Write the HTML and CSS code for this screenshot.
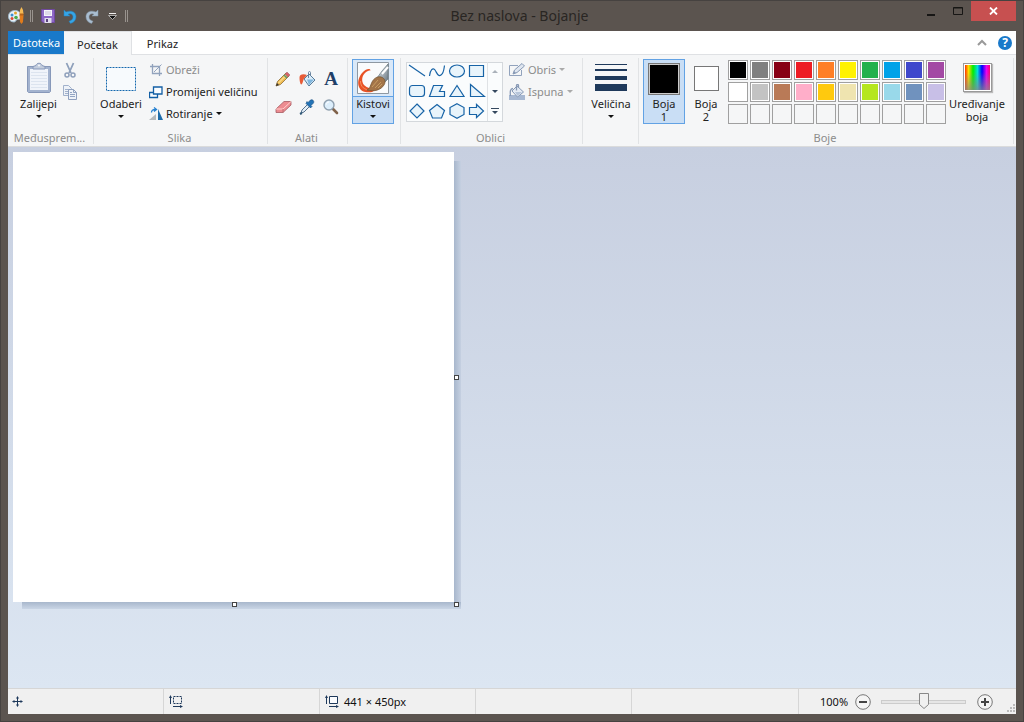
FILE: index.html
```html
<!DOCTYPE html>
<html lang="hr">
<head>
<meta charset="utf-8">
<meta name="viewport" content="width=device-width,initial-scale=1">
<title>Bez naslova - Bojanje</title>
<link rel="stylesheet" href="styles.css">
</head>
<body>
<div class="window">

  <!-- ===== Title bar ===== -->
  <header class="titlebar">
    <div class="quick">
      <svg class="app-icon" width="16" height="18" viewBox="0 0 16 18">
        <path d="M7 3.500C3 3.500.5 6 .5 9.500S3 15 6 15c2 0 1.500-2 3-2.500S13 13 13 9.500 11 3.500 7 3.500z" fill="#e8f1f8" stroke="#9fb9cc"/>
        <circle cx="4" cy="8" r="1.500" fill="#3c8fd0"/><circle cx="7.500" cy="6" r="1.500" fill="#e2a32b"/><circle cx="4" cy="11.500" r="1.500" fill="#d94a35"/><circle cx="8" cy="10.500" r="1.800" fill="#49ab4c"/>
        <path d="M11.500 8h4l-.5 7-1.500 2-1.500-2z" fill="#e07b1c"/><path d="M11.500 7l.5-4 1.500-3 1.500 3 .5 4z" fill="#f6ba54"/><path d="M11.500 6.500h4v2h-4z" fill="#b8651b"/>
      </svg>
      <span class="grip"></span>
      <button class="quick-btn" aria-label="Spremi">
        <svg width="14" height="14" viewBox="0 0 14 14"><path d="M.5.5h13v13H2l-1.500-1.500z" fill="#8d67c5" stroke="#70499f"/><path d="M3 1h8v6H3z" fill="#f5f4fa"/><path d="M4 3h6M4 5h6" stroke="#c6bed7"/><path d="M3.500 9h7v5h-7z" fill="#e1dced"/><path d="M5 10h2v3H5z" fill="#59427b"/></svg>
      </button>
      <button class="quick-btn" aria-label="Poništi">
        <svg width="14" height="15" viewBox="0 0 14 15"><path d="M1 1v6h6L5 5.300c3-1.300 5 .2 5 2.700 0 2.200-1.500 3.500-4 4.200L7.500 14.500C11 13.500 13 11 13 7.700 13 3 8.500.8 3 3z" fill="#35a5e7" stroke="#2483c0" stroke-width=".5"/></svg>
      </button>
      <button class="quick-btn" aria-label="Ponovi">
        <svg width="14" height="15" viewBox="0 0 14 15"><path d="M13 1v6H7l2-1.700C6 4 4 5.500 4 8c0 2.200 1.500 3.500 4 4.200L6.500 14.500C3 13.500 1 11 1 7.700 1 3 5.500.8 11 3z" fill="#a9bdd0" stroke="#8699aa" stroke-width=".5"/></svg>
      </button>
      <button class="quick-btn quick-more" aria-label="Prilagodi alatnu traku">
        <svg width="9" height="8" viewBox="0 0 9 8"><path d="M1 1.500h7" stroke="#eee"/><path d="M.5 3.500h8L4.500 7.500z" fill="#111" stroke="#ddd" stroke-width=".7"/></svg>
      </button>
      <span class="grip"></span>
    </div>
    <h1 class="title">Bez naslova - Bojanje</h1>
    <div class="controls">
      <button class="control" aria-label="Minimiziraj"><svg width="10" height="10" viewBox="0 0 10 10"><path d="M1 8h8v2H1z" fill="#171615"/></svg></button>
      <button class="control" aria-label="Maksimiziraj"><svg width="10" height="8" viewBox="0 0 10 8"><path d="M.5.5h9v7h-9zM.5 1h9" fill="none" stroke="#171615"/></svg></button>
      <button class="control close" aria-label="Zatvori"><svg width="9" height="8" viewBox="0 0 9 8"><path d="M1 .5l7 7M8 .5l-7 7" stroke="#fff" stroke-width="1.800"/></svg></button>
    </div>
  </header>

  <!-- ===== Tabs ===== -->
  <nav class="tabs">
    <button class="tab file">Datoteka</button>
    <button class="tab active">Početak</button>
    <button class="tab">Prikaz</button>
    <div class="tab-tools">
      <button class="icon-btn" aria-label="Smanji vrpcu"><svg width="10" height="8" viewBox="0 0 10 8"><path d="M1 6l4-4 4 4" fill="none" stroke="#999" stroke-width="2"/></svg></button>
      <button class="help" aria-label="Pomoć">?</button>
    </div>
  </nav>

  <!-- ===== Ribbon ===== -->
  <div class="ribbon">
    <section class="group g-clip">
      <div class="tools">
        <button class="big">
          <span class="slot"><svg width="26" height="32" viewBox="0 0 26 32">
            <path d="M1.500 4.500h23v25l-1 1h-21l-1-1z" fill="#a3b3cf" stroke="#8798b9"/><path d="M4 7h18v21H4z" fill="#f0f4fa"/>
            <path d="M5 10.500h16M5 13.500h16M5 16.500h16M5 19.500h16M5 22.500h16M5 25.500h16" stroke="#dce4ef"/>
            <path d="M7 7V4.500l3-1C10.500.5 15.500.5 16 3.500l3 1V7z" fill="#c3cddd" stroke="#8798b9"/><circle cx="13" cy="3.500" r="1" fill="#f5f7fa"/></svg></span>
          <span class="label">Zalijepi</span><i class="arrow"></i>
        </button>
        <div class="stack">
          <button class="icon-btn" aria-label="Izreži"><svg width="12" height="17" viewBox="0 0 12 17"><path d="M2.500 1l4.500 10M9.500 1L5 11" stroke="#8fa0bb" stroke-width="1.800"/><circle cx="3" cy="13" r="2" fill="none" stroke="#8fa0bb" stroke-width="1.500"/><circle cx="9" cy="13" r="2" fill="none" stroke="#8fa0bb" stroke-width="1.500"/></svg></button>
          <button class="icon-btn" aria-label="Kopiraj"><svg width="16" height="17" viewBox="0 0 16 17"><path d="M1.500 1.500h5l3 3v7h-8z" fill="#eef2f8" stroke="#a1b1cb"/><path d="M3 5.500h4M3 7.500h4M3 9.500h4" stroke="#a1b1cb"/><path d="M6.500 5.500h5l3 3v7h-8z" fill="#eef2f8" stroke="#8fa0bf"/><path d="M11.500 5.500v3h3M8 10.500h5M8 12.500h5M8 8.500h2" fill="none" stroke="#93a5c3"/></svg></button>
        </div>
      </div>
      <h2 class="caption">Međusprem...</h2>
    </section>

    <section class="group g-image">
      <div class="tools">
        <button class="big">
          <span class="slot"><svg width="32" height="26" viewBox="0 0 32 26"><path d="M1.500 1.500h29v23h-29z" fill="#f7fafd" stroke="#1468ae" stroke-dasharray="2 1"/></svg></span>
          <span class="label">Odaberi</span><i class="arrow"></i>
        </button>
        <div class="list">
          <button class="row disabled"><svg width="14" height="14" viewBox="0 0 14 14"><path d="M3.500 1v9.500H13M1 3.500h9.500V13" fill="none" stroke="#92a3bd" stroke-width="1.300"/><path d="M5 9l7.500-7.500" stroke="#92a3bd"/></svg>Obreži</button>
          <button class="row"><svg width="14" height="14" viewBox="0 0 14 14"><path d="M.5 7.500h8v5h-8z" fill="#f9fcff" stroke="#135fa5" stroke-width="1.300"/><path d="M4.500 2h8.500v7H4.500z" fill="#f9fcff" stroke="#135fa5" stroke-width="1.300"/></svg>Promijeni veličinu</button>
          <button class="row"><svg width="14" height="14" viewBox="0 0 14 14"><path d="M0 13h7V7z" fill="#b4b8bb"/><path d="M9 13V2l5 11z" fill="#1e6caa"/><path d="M2.500 5.500c0-2 1-3 4-3M5 .5l2.500 2L5 4.500" fill="none" stroke="#2781d1" stroke-width="1.300"/></svg>Rotiranje<i class="arrow"></i></button>
        </div>
      </div>
      <h2 class="caption">Slika</h2>
    </section>

    <section class="group g-tools">
      <div class="tools tool-grid">
        <button class="icon-btn" aria-label="Olovka"><svg width="16" height="16" viewBox="0 0 16 16"><path d="M1 15l1.500-4.500L11 2l3 3-8.500 8.500z" fill="#f0bd55" stroke="#8a6a32" stroke-width=".8"/><path d="M3.500 12L12 3.500" stroke="#fff0ae"/><path d="M10 3l3 3 2-2-3-3z" fill="#d7626b" stroke="#8e6261" stroke-width=".5"/><path d="M9 4l3 3" stroke="#62966b" stroke-width="1.500"/><path d="M1 15l1-3 2 2z" fill="#333"/></svg></button>
        <button class="icon-btn" aria-label="Ispuni bojom"><svg width="17" height="16" viewBox="0 0 17 16"><path d="M5 8l5-5 6 6-6 6z" fill="#d9ecf9" stroke="#567b9a"/><path d="M8 8.500h7L10 14z" fill="#81b6dd"/><path d="M9.500 7V1.500c0-1.300 2-1.300 2 0V5" fill="none" stroke="#6985a0"/><path d="M8 4C4 2.500.5 3.500.5 6.500c0 3 .5 6 1.500 7 1.500.5 2-4 3-6z" fill="#e75b37"/></svg></button>
        <button class="icon-btn letter" aria-label="Tekst">A</button>
        <button class="icon-btn" aria-label="Gumica"><svg width="17" height="14" viewBox="0 0 17 14"><path d="M1 9l8-7.500h7V5l-8 7.500H1z" fill="#ed8c91" stroke="#a65c62" stroke-width=".8"/><path d="M1 9h7l8-7.500" fill="none" stroke="#ffd0cd"/><path d="M8 9v3.500" stroke="#bd6d72"/></svg></button>
        <button class="icon-btn" aria-label="Birač boja"><svg width="16" height="16" viewBox="0 0 16 16"><path d="M2 14l1-3 6-6 2 2-6 6z" fill="#e2eef7" stroke="#56728e"/><path d="M7 4.500L11.500 9l1.500-1.500-1-1 2.500-2.500c1-2-1-4-3-3L9 3.500l-1-1z" fill="#2373b6" stroke="#174e80" stroke-width=".6"/><path d="M1 15l2-1" stroke="#315977" stroke-width="2"/></svg></button>
        <button class="icon-btn" aria-label="Povećalo"><svg width="16" height="16" viewBox="0 0 16 16"><path d="M9.500 9.500l4.500 4.500" stroke="#80634b" stroke-width="2.600" stroke-linecap="round"/><circle cx="6" cy="6" r="5" fill="#dceefb" stroke="#8fa0af" stroke-width="1.400"/><path d="M3.500 5.500c0-1.500 1-2.500 2.500-2.500" fill="none" stroke="#fff"/></svg></button>
      </div>
      <h2 class="caption">Alati</h2>
    </section>

    <section class="group g-brush">
      <div class="tools">
        <button class="big selected split">
          <span class="slot"><svg width="32" height="32" viewBox="0 0 32 32">
            <defs><linearGradient id="metal" x2="1" y2="1"><stop stop-color="#eef3f7"/><stop offset="1" stop-color="#65737d"/></linearGradient></defs>
            <path d="M.5.5h31v31H.5z" fill="#fafbfc" stroke="#8e98a2"/>
            <path d="M13.500 8.500C13 6 9 7 6 10 2 14 0 20 2 25c2 5 8 6 13 5l5-3c-5 0-10-1-13-4-3-4-2-9 1-12 2-2 4-2.500 5.500-2.500z" fill="#e85225"/><path d="M3.500 19c0 6 4 9 10 9" fill="none" stroke="#f79160"/>
            <path d="M20 16l5-7 6-7v15l-4 4z" fill="url(#metal)" stroke="#667780" stroke-width=".7"/><path d="M25 12l6-7" stroke="#fff" stroke-width="2"/>
            <path d="M10 28c3-1 3-4 5-8 2-4 6-6 9-5 4 1 5 5 3 8-3 5-10 7-17 5z" fill="#a37448" stroke="#70502e" stroke-width=".7"/><path d="M15 25l6-7M18 26l6-6M21 26l4-4" stroke="#d0a76a" stroke-width=".8"/></svg></span>
          <span class="label">Kistovi</span><i class="arrow"></i>
        </button>
      </div>
    </section>

    <section class="group g-shapes">
      <div class="tools">
        <div class="gallery">
          <div class="shapes">
            <button class="icon-btn" aria-label="Crta"><svg width="18" height="16" viewBox="0 0 18 16"><path d="M1 2l16 11"/></svg></button>
            <button class="icon-btn" aria-label="Krivulja"><svg width="18" height="16" viewBox="0 0 18 16"><path class="open" d="M1.500 13C2 7 5 4 7 7s3 7 6 5 3-7 3.500-9.500"/></svg></button>
            <button class="icon-btn" aria-label="Elipsa"><svg width="18" height="16" viewBox="0 0 18 16"><ellipse cx="9" cy="8" rx="7.500" ry="6"/></svg></button>
            <button class="icon-btn" aria-label="Pravokutnik"><svg width="18" height="16" viewBox="0 0 18 16"><path d="M1.500 2.500h14v11h-14z"/></svg></button>
            <button class="icon-btn" aria-label="Zaobljeni pravokutnik"><svg width="18" height="16" viewBox="0 0 18 16"><rect x="1.500" y="2.500" width="15" height="11" rx="3"/></svg></button>
            <button class="icon-btn" aria-label="Mnogokut"><svg width="18" height="16" viewBox="0 0 18 16"><path d="M5.500 2.500h9l-3 6h5v5h-15z"/></svg></button>
            <button class="icon-btn" aria-label="Trokut"><svg width="18" height="16" viewBox="0 0 18 16"><path d="M9 2.500l7 11H2z"/></svg></button>
            <button class="icon-btn" aria-label="Pravokutni trokut"><svg width="18" height="16" viewBox="0 0 18 16"><path d="M2.500 1.500l14 12h-14z"/></svg></button>
            <button class="icon-btn" aria-label="Romb"><svg width="18" height="16" viewBox="0 0 18 16"><path d="M9 1l7 7-7 7-7-7z"/></svg></button>
            <button class="icon-btn" aria-label="Peterokut"><svg width="18" height="16" viewBox="0 0 18 16"><path d="M9 1.500l7.500 6-3 7.500h-9l-3-7.500z"/></svg></button>
            <button class="icon-btn" aria-label="Šesterokut"><svg width="18" height="16" viewBox="0 0 18 16"><path d="M9 .8l7 3.700v7L9 15.200l-7-3.700v-7z"/></svg></button>
            <button class="icon-btn" aria-label="Strelica"><svg width="18" height="16" viewBox="0 0 18 16"><path d="M1.500 4.500h7V1.500L15.500 8l-7 6.500v-3h-7z"/></svg></button>
          </div>
          <div class="scroller">
            <button class="icon-btn" aria-label="Gore"><i class="arrow up"></i></button>
            <button class="icon-btn" aria-label="Dolje"><i class="arrow navy"></i></button>
            <button class="icon-btn" aria-label="Više"><svg width="8" height="8" viewBox="0 0 8 8"><path d="M0 1h8v1H0zM1 4h6L4 7z" fill="#34485f"/></svg></button>
          </div>
        </div>
        <div class="list">
          <button class="row disabled"><svg width="16" height="14" viewBox="0 0 16 14"><path d="M12.500 7v5.500h-12v-10H9" fill="none" stroke="#92a3bd"/><path d="M4 11l1.500-4L13 .5 15.500 3 8 9.500z" fill="#dfe6f0" stroke="#8799b5"/><path d="M4 11l1-3 2 2z" fill="#8799b5"/></svg>Obris<i class="arrow"></i></button>
          <button class="row disabled"><svg width="16" height="16" viewBox="0 0 16 16"><path d="M0 11h16v5H0z" fill="#a7b8d2"/><path d="M3 7l5-5 6.500 6L8.500 13z" fill="#e4ebf4" stroke="#8799b5"/><path d="M6 8h7l-4.500 4z" fill="#b6c5da"/><path d="M7.500 6.500V1.500c0-1.300 2-1.300 2 0V4M4 4.500C1 4.500 1 8 1.500 12" fill="none" stroke="#8799b5" stroke-width="1.300"/></svg>Ispuna<i class="arrow"></i></button>
        </div>
      </div>
      <h2 class="caption">Oblici</h2>
    </section>

    <section class="group g-size">
      <div class="tools">
        <button class="big">
          <span class="slot"><svg width="32" height="30" viewBox="0 0 32 30"><path d="M0 0h32v1H0zM0 5h32v2H0zM0 12h32v4H0zM0 20h32v7H0z" fill="#1e395b"/></svg></span>
          <span class="label">Veličina</span><i class="arrow"></i>
        </button>
      </div>
    </section>

    <section class="group g-colors">
      <div class="tools">
        <button class="big selected"><span class="slot"><span class="swatch front"></span></span><span class="label">Boja<br>1</span></button>
        <button class="big"><span class="slot"><span class="swatch back"></span></span><span class="label">Boja<br>2</span></button>
        <div class="palette">
          <button class="color black" aria-label="Crna"></button>
          <button class="color gray" aria-label="Siva"></button>
          <button class="color dark-red" aria-label="Tamnocrvena"></button>
          <button class="color red" aria-label="Crvena"></button>
          <button class="color orange" aria-label="Narančasta"></button>
          <button class="color yellow" aria-label="Žuta"></button>
          <button class="color green" aria-label="Zelena"></button>
          <button class="color turquoise" aria-label="Tirkizna"></button>
          <button class="color indigo" aria-label="Indigo"></button>
          <button class="color purple" aria-label="Ljubičasta"></button>
          <button class="color white" aria-label="Bijela"></button>
          <button class="color light-gray" aria-label="Svijetlosiva"></button>
          <button class="color brown" aria-label="Smeđa"></button>
          <button class="color rose" aria-label="Ružičasta"></button>
          <button class="color gold" aria-label="Zlatna"></button>
          <button class="color tan" aria-label="Svijetložuta"></button>
          <button class="color lime" aria-label="Limeta"></button>
          <button class="color aqua" aria-label="Svijetlotirkizna"></button>
          <button class="color blue-gray" aria-label="Plavosiva"></button>
          <button class="color lavender" aria-label="Lavanda"></button>
          <button class="color" aria-label="Prilagođena 1"></button>
          <button class="color" aria-label="Prilagođena 2"></button>
          <button class="color" aria-label="Prilagođena 3"></button>
          <button class="color" aria-label="Prilagođena 4"></button>
          <button class="color" aria-label="Prilagođena 5"></button>
          <button class="color" aria-label="Prilagođena 6"></button>
          <button class="color" aria-label="Prilagođena 7"></button>
          <button class="color" aria-label="Prilagođena 8"></button>
          <button class="color" aria-label="Prilagođena 9"></button>
          <button class="color" aria-label="Prilagođena 10"></button>
        </div>
        <button class="big edit"><span class="slot"><span class="spectrum"></span></span><span class="label">Uređivanje<br>boja</span></button>
      </div>
      <h2 class="caption">Boje</h2>
    </section>
  </div>

  <!-- ===== Drawing area ===== -->
  <main class="workspace">
    <div class="sheet">
      <canvas class="canvas" width="441" height="450"></canvas>
      <span class="handle e"></span>
      <span class="handle s"></span>
      <span class="handle se"></span>
    </div>
  </main>

  <!-- ===== Status bar ===== -->
  <footer class="status">
    <div class="cell"><svg width="12" height="12" viewBox="0 0 12 12"><path d="M5.500 1v9M1 5.500h9" stroke="#1e395b"/><path d="M4 2.500h3L5.500 0zM4 8.500h3L5.500 11zM2.500 4v3L0 5.500zM8.500 4v3L11 5.500z" fill="#1e395b"/></svg></div>
    <div class="cell"><svg width="14" height="13" viewBox="0 0 14 13"><path d="M1.500 2v7M4 11.500h8" stroke="#1e395b"/><path d="M0 3h3L1.500 0zM11 10v3l3-1.500z" fill="#1e395b"/><path d="M4.500 1.500h8v7h-8z" fill="none" stroke="#1e395b" stroke-dasharray="2 1"/></svg></div>
    <div class="cell"><svg width="14" height="13" viewBox="0 0 14 13"><path d="M1.500 2v7M4 11.500h8" stroke="#1e395b"/><path d="M0 3h3L1.500 0zM11 10v3l3-1.500z" fill="#1e395b"/><path d="M4.500 1.500h8v7h-8z" fill="#fafcff" stroke="#1e395b"/></svg>441 × 450px</div>
    <div class="cell"></div>
    <div class="cell wide"></div>
    <div class="zoom">
      <label for="zoom">100%</label>
      <button class="zoom-btn" aria-label="Smanji"><svg width="16" height="16" viewBox="0 0 16 16"><circle cx="8" cy="8" r="7.300" fill="#f5f5f5" stroke="#777"/><path d="M4 7h8v2H4z" fill="#444"/></svg></button>
      <input class="slider" id="zoom" type="range" min="0" max="100" value="50">
      <button class="zoom-btn" aria-label="Povećaj"><svg width="16" height="16" viewBox="0 0 16 16"><circle cx="8" cy="8" r="7.300" fill="#f5f5f5" stroke="#777"/><path d="M4 7h8v2H4zM7 4h2v8H7z" fill="#444"/></svg></button>
      <svg class="resize" width="9" height="9" viewBox="0 0 9 9"><path d="M6 0h2v2H6zM3 3h2v2H3zM6 3h2v2H6zM0 6h2v2H0zM3 6h2v2H3zM6 6h2v2H6z" fill="#bbb"/></svg>
    </div>
  </footer>
</div>
</body>
</html>
```
FILE: styles.css
```css
/* ===== Base ===== */
:root{
  --frame:#5b544f;
  --ribbon:#f5f6f7;
  --line:#dfe1e4;
  --text:#222;
  --muted:#8c8c8c;
}
*{box-sizing:border-box}
body{margin:0;font:11px/13px "Noto Sans","Open Sans",sans-serif;color:var(--text)}
h1,h2{margin:0;font-weight:400}
button{
  display:flex;align-items:center;justify-content:center;
  margin:0;padding:0;border:0;background:none;color:inherit;font:inherit;
}
svg{display:block;flex:none}

.window{
  display:flex;flex-direction:column;min-height:100vh;
  padding:0 7px 7px;
  background:var(--frame);
  border:1px solid #464240;
}

/* ===== Title bar ===== */
.titlebar{display:flex;height:30px;flex:none}
.quick{display:flex;align-items:center;gap:8px}
.app-icon{margin-right:-2px}
.quick-btn{width:14px;height:18px}
.quick-more{width:10px}
.grip{width:3px;height:12px;border:solid #99938e;border-width:0 1px}
.title{flex:1;padding-right:6px;text-align:center;font-size:14px;line-height:29px;color:#292623}
.controls{display:flex;align-items:flex-start}
.control{width:27px;height:20px}
.close{width:45px;background:#c75050}

/* ===== Tabs ===== */
.tabs{display:flex;height:24px;flex:none;background:#fff;border-bottom:1px solid var(--line)}
.tab{padding:2px 15px 0}
.tab.file{padding:0 4px 0 5px;background:#1979ca;color:#fff}
.tab.active{height:24px;padding:1px 13px 0;background:var(--ribbon);border:solid var(--line);border-width:1px 1px 0 0}
.tab-tools{display:flex;align-items:center;gap:10px;margin-left:auto;padding-right:4px}
.help{width:14px;height:14px;border-radius:50%;background:#1979ca;color:#fff;font-size:12px;font-weight:700}

/* ===== Ribbon ===== */
.ribbon{display:flex;flex:none;height:92px;padding-top:1px;background:var(--ribbon);border-bottom:1px solid #dadbdc}
.group{display:flex;flex-direction:column;flex:none;padding:3px 4px 1px;background:linear-gradient(#e1e3e5,#e1e3e5) right center/1px 86px no-repeat}
.tools{display:flex;align-items:flex-start;height:66px}
.caption{margin-top:auto;padding-right:3px;text-align:center;font-size:11px;line-height:15px;color:var(--muted)}
.g-clip{width:86px}
.g-image{width:174px}
.g-tools{width:80px}
.g-brush{width:53px}
.g-shapes{width:182px}
.g-size{width:56px}
.g-colors{width:375px}

.big{flex-direction:column;justify-content:flex-start;min-width:42px;height:65px;border:1px solid transparent}
.slot{display:flex;align-items:center;justify-content:center;height:37px}
.label{white-space:nowrap}
.selected{background:#c9def5;border-color:#62a2e4}
.selected .slot{width:100%}
.split .slot{background:#d9e8f8;border-bottom:1px solid #62a2e4}
.arrow{width:0;height:0;margin-top:5px;border:3px solid transparent;border-top-color:#111;border-bottom:0}
.row .arrow{margin:0}
.icon-btn{min-width:12px;height:18px}

.g-clip .big{width:53px}
.g-clip .slot{padding-bottom:2px}
.stack{display:flex;flex-direction:column;align-items:center;gap:4px;padding-top:2px;margin-left:-3px}
.g-image .big{width:46px}
.list{display:flex;flex-direction:column}
.row{justify-content:flex-start;gap:3px;height:22px;padding:0 0 1px 6px;white-space:nowrap}
.disabled{color:var(--muted)}
.disabled .arrow{border-top-color:#aaa}
.g-image .list{margin-left:-1px}

.tool-grid{display:grid;grid-template-columns:repeat(3,24px);grid-template-rows:28px 28px;padding-top:6px;margin-left:-1px;align-items:center;justify-content:start}
.letter{color:#1f3f68;font:700 19px/18px "Liberation Serif",serif}

/* shape gallery */
.g-shapes .row{padding-left:6px}
.gallery{display:flex;height:60px;margin:3px 0 0 1px;border:1px solid #d4d8dc;background:#fafcfd}
.shapes{display:grid;grid-template-columns:repeat(4,20px);grid-template-rows:repeat(3,20px);margin-top:-1px}
.shapes svg *{fill:#e8f4fb;stroke:#1763a6;stroke-width:1.200}
.shapes .open{fill:none}
.scroller{display:grid;grid-template-rows:repeat(3,20px);width:15px;margin-top:-1px;border-left:1px solid #dfe2e5}
.scroller .arrow{margin:0}
.scroller .navy{border-top-color:#34485f}
.scroller .up{border:3px solid transparent;border-top:0;border-bottom-color:#aab1ba}
.g-size .big{width:49px}

/* colors */
.swatch{display:block;border:1px solid #777;background:#fff}
.front{width:32px;height:32px;border-color:#777;background:#000;box-shadow:inset 0 0 0 1px #ccc}
.back{width:25px;height:25px}
.palette{display:grid;grid-template-columns:repeat(10,20px);grid-auto-rows:20px;gap:2px;margin:1px 3px 0 1px}
.color{padding:1px;border:1px solid #a0a0a0}
.color:nth-child(-n+20){background-clip:content-box;box-shadow:inset 0 0 0 1px #fff}
.black{background:#000}
.gray{background:#7f7f7f}
.dark-red{background:#880015}
.red{background:#ed1c24}
.orange{background:#ff7f27}
.yellow{background:#fff200}
.green{background:#22b14c}
.turquoise{background:#00a2e8}
.indigo{background:#3f48cc}
.purple{background:#a349a4}
.white{background:#fff}
.light-gray{background:#c3c3c3}
.brown{background:#b97a57}
.rose{background:#ffaec9}
.gold{background:#ffc90e}
.tan{background:#efe4b0}
.lime{background:#b5e61d}
.aqua{background:#99d9ea}
.blue-gray{background:#7092be}
.lavender{background:#c8bfe7}
.edit{width:56px}
.edit .slot{padding-bottom:2px}
.spectrum{
  width:29px;height:29px;border:1px solid #999;box-shadow:inset 0 0 0 1px #fff,1px 1px 1px #bbb;
  background:linear-gradient(transparent 30%,#888c),linear-gradient(90deg,red,#fd0,#0e0,#0dd,#00f,#e0e,#f04);
}

/* ===== Drawing area ===== */
.workspace{flex:1;padding:5px;background:linear-gradient(#c7cfe0,#dce6f2)}
.sheet{position:relative;width:fit-content}
.canvas{display:block;background:#fff}
.sheet::before,.sheet::after{content:"";position:absolute}
.sheet::before{left:100%;top:9px;bottom:0;width:7px;background:linear-gradient(90deg,#a8b7cc,#c5d0e1)}
.sheet::after{left:9px;right:-7px;top:100%;height:7px;background:linear-gradient(#a8b7cc,#c9d5e5)}
.handle{position:absolute;z-index:1;width:5px;height:5px;border:1px solid #444;background:#fff}
.e{left:100%;top:50%;margin-top:-2px}
.s{left:50%;top:100%;margin-left:-2px}
.se{left:100%;top:100%}

/* ===== Status bar ===== */
.status{display:flex;flex:none;height:26px;background:#f0f0f0;border-top:1px solid #d6d6d6;color:#111}
.cell{display:flex;align-items:center;gap:5px;width:156px;padding-left:4px;border-right:1px solid #d6d6d6}
.cell + .cell{padding-left:5px}
.cell.wide{flex:1}
.zoom{display:flex;align-items:center;width:217px;padding-left:21px}
.zoom-btn{width:16px;height:16px;margin-left:7px}
.slider{appearance:none;width:85px;height:16px;margin:0 4px 0 10px;background:none}
.slider::-webkit-slider-runnable-track{height:4px;border:1px solid #ccc;background:#e6e6e6}
.slider::-webkit-slider-thumb{
  appearance:none;width:10px;height:16px;margin-top:-8px;
  background:url("data:image/svg+xml,%3Csvg xmlns='http://www.w3.org/2000/svg' width='10' height='16'%3E%3Cpath d='M.5.5h9v11l-4.500 4-4.500-4z' fill='%23f0f0f0' stroke='%23888'/%3E%3C/svg%3E") no-repeat;
}
.resize{margin:auto 0 1px auto}
```
